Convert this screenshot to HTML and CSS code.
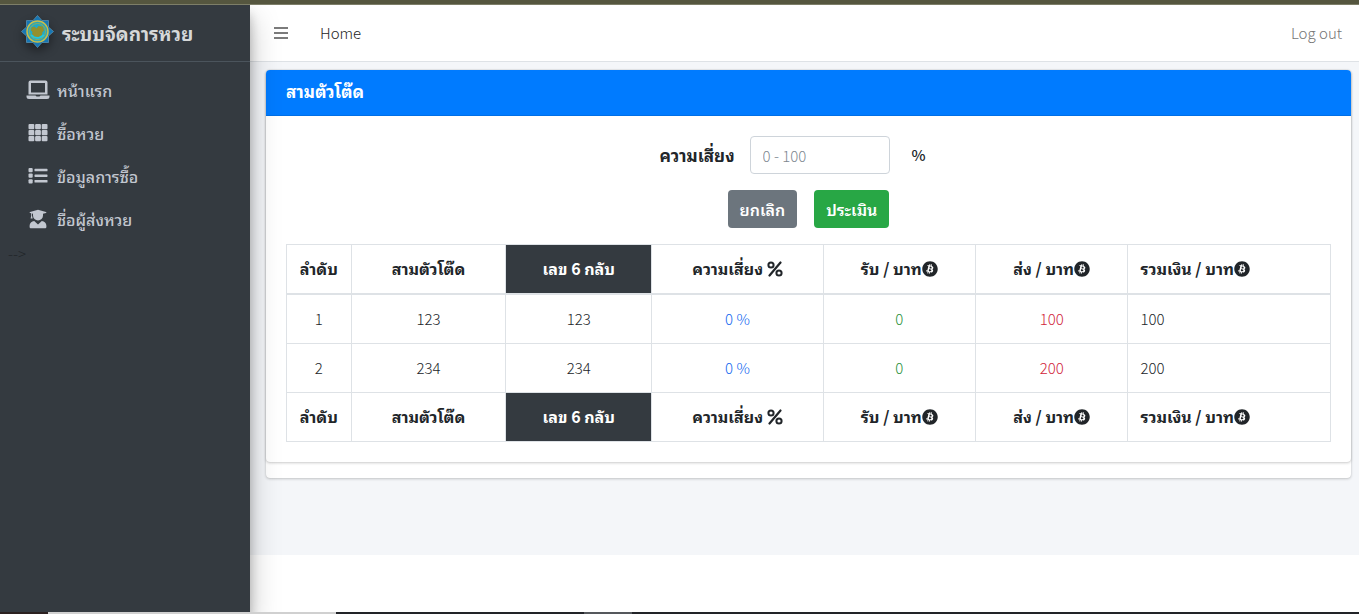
FILE: index.html
```
<!DOCTYPE html>
<html lang="th">
<head>
  <meta charset="UTF-8">
  <meta name="viewport" content="width=device-width, initial-scale=1.0">
  <title>ระบบจัดการหวย</title>
  <link rel="stylesheet" href="styles.css">
</head>
<body>
  <!-- shared icons -->
  <svg class="sprite" aria-hidden="true">
    <symbol id="icon-percent" viewBox="0 0 16 16">
      <path d="M13.500 1.500L2.500 14.500" stroke="currentColor" stroke-width="2.2" stroke-linecap="round"/>
      <circle cx="4" cy="4" r="2.6" fill="none" stroke="currentColor" stroke-width="2"/>
      <circle cx="12" cy="12" r="2.6" fill="none" stroke="currentColor" stroke-width="2"/>
    </symbol>
    <symbol id="icon-btc" viewBox="0 0 512 512">
      <path fill="currentColor" d="M504 256c0 136.967-111.033 248-248 248S8 392.967 8 256 119.033 8 256 8s248 111.033 248 248zm-141.651-35.33c4.937-32.999-20.191-50.739-54.55-62.573l11.146-44.702-27.213-6.781-10.851 43.524c-7.154-1.783-14.502-3.464-21.803-5.13l10.929-43.81-27.198-6.781-11.153 44.686c-5.922-1.349-11.735-2.682-17.377-4.084l.031-.14-37.53-9.37-7.239 29.062s20.191 4.627 19.765 4.913c11.022 2.751 13.014 10.044 12.68 15.825l-12.696 50.925c.76.194 1.744.473 2.829.907-.907-.225-1.876-.473-2.876-.713l-17.796 71.338c-1.349 3.348-4.767 8.37-12.471 6.464.271.395-19.78-4.937-19.78-4.937l-13.51 31.147 35.414 8.827c6.588 1.651 13.045 3.379 19.4 5.006l-11.262 45.213 27.182 6.781 11.153-44.733a1038.209 1038.209 0 0 0 21.687 5.627l-11.115 44.523 27.213 6.781 11.262-45.128c46.404 8.781 81.299 5.239 95.986-36.727 11.834-33.79-.589-53.281-25.004-65.991 17.78-4.098 31.174-15.792 34.747-39.949zm-62.177 87.179c-8.41 33.79-65.308 15.523-83.755 10.943l14.944-59.899c18.446 4.603 77.6 13.717 68.811 48.956zm8.417-87.667c-7.673 30.736-55.031 15.12-70.393 11.292l13.548-54.327c15.363 3.828 64.836 10.973 56.845 43.035z"/>
    </symbol>
  </svg>

  <div class="top-strip"></div>

  <div class="wrapper">
    <aside class="sidebar">
      <a href="#" class="brand">
        <svg class="brand-logo" viewBox="0 0 66 66" aria-hidden="true">
          <g fill="#1676b4" stroke="#5b93b3" stroke-width="1.5">
            <path d="M33 1L42 11L55 11L55 24L65 33L55 42L55 55L42 55L33 65L24 55L11 55L11 42L1 33L11 24L11 11L24 11Z"/>
          </g>
          <circle cx="33" cy="33" r="21" fill="#2fa3b5" stroke="#c7bd4b" stroke-width="3"/>
          <circle cx="33" cy="33" r="16" fill="#1fa9c9" stroke="#8fae5a" stroke-width="2"/>
          <path d="M20 40q13 11 26 0" fill="none" stroke="#20c6df" stroke-width="4"/>
          <path fill="#93902c" d="M21 25l6-2 4 4 4-5 9 1 2 8-3 3-1 6-7 4-8-1-5-5 1-4-3-3z"/>
        </svg>
        <span>ระบบจัดการหวย</span>
      </a>

      <nav class="menu">
        <a href="#" class="menu-link">
          <svg class="menu-icon icon-laptop" viewBox="0 0 24 20" fill="currentColor" aria-hidden="true">
            <path fill-rule="evenodd" d="M4.500 0.500h15a2 2 0 0 1 2 2v12h-19v-12a2 2 0 0 1 2-2zM5 3v9.500h14V3z"/>
            <path d="M0.500 15.500h9l1 1h3l1-1h9v1a2.500 2.500 0 0 1-2.500 2.500H3a2.500 2.500 0 0 1-2.500-2.500z"/>
          </svg>
          <span>หน้าแรก</span>
        </a>
        <a href="#" class="menu-link">
          <svg class="menu-icon" viewBox="0 0 20 20" fill="currentColor" aria-hidden="true">
            <rect x="0.500" y="1" width="5.800" height="5.200" rx="1"/><rect x="7.100" y="1" width="5.800" height="5.200" rx="1"/><rect x="13.700" y="1" width="5.800" height="5.200" rx="1"/>
            <rect x="0.500" y="7" width="5.800" height="5.200" rx="1"/><rect x="7.100" y="7" width="5.800" height="5.200" rx="1"/><rect x="13.700" y="7" width="5.800" height="5.200" rx="1"/>
            <rect x="0.500" y="13" width="5.800" height="5.200" rx="1"/><rect x="7.100" y="13" width="5.800" height="5.200" rx="1"/><rect x="13.700" y="13" width="5.800" height="5.200" rx="1"/>
          </svg>
          <span>ซื้อหวย</span>
        </a>
        <a href="#" class="menu-link">
          <svg class="menu-icon" viewBox="0 0 20 20" fill="currentColor" aria-hidden="true">
            <rect x="0.500" y="2" width="4.200" height="4.200" rx="1"/><rect x="0.500" y="7.600" width="4.200" height="4.200" rx="1"/><rect x="0.500" y="13.200" width="4.200" height="4.200" rx="1"/>
            <rect x="6.500" y="2.800" width="13" height="2.500" rx="0.600"/><rect x="6.500" y="8.400" width="13" height="2.500" rx="0.600"/><rect x="6.500" y="14" width="13" height="2.500" rx="0.600"/>
          </svg>
          <span>ข้อมูลการซื้อ</span>
        </a>
        <a href="#" class="menu-link">
          <svg class="menu-icon" viewBox="0 0 20 20" fill="currentColor" aria-hidden="true">
            <path d="M10 0.800l8 2.200q1 .4 0 .9l-3 .9v1.700a5 5 0 0 1-10 0V4.800l-1-.3v2.300l.7 2.700H2.600l.6-2.700V4.200L2 3.900q-1-.5 0-.9z"/>
            <path d="M6.200 12L10 15.500 13.800 12c2.600.4 4.600 2.200 4.600 4.800v1c0 1-.6 1.500-1.500 1.500H3.100c-.9 0-1.500-.5-1.500-1.500v-1c0-2.600 2-4.400 4.600-4.800z"/>
          </svg>
          <span>ชื่อผู้ส่งหวย</span>
        </a>
      </nav>
      <div class="stray">--&gt;</div>
    </aside>

    <div class="page">
      <header class="navbar">
        <button type="button" class="nav-toggle" aria-label="Menu">
          <svg viewBox="0 0 14 12" aria-hidden="true"><path d="M0 1h14M0 6h14M0 11h14" stroke="currentColor" stroke-width="2"/></svg>
        </button>
        <a href="#" class="nav-home">Home</a>
        <a href="#" class="nav-logout">Log out</a>
      </header>

      <main class="content">
        <div class="card">
          <section class="card card-inner">
            <h3 class="card-header">สามตัวโต๊ด</h3>
            <div class="card-body">
              <form class="risk-form">
                <div class="form-row">
                  <label for="risk">ความเสี่ยง</label>
                  <input type="text" id="risk" class="form-control" placeholder="0 - 100">
                  <span class="unit">%</span>
                </div>
                <div class="form-actions">
                  <button type="reset" class="btn btn-secondary">ยกเลิก</button>
                  <button type="button" class="btn btn-success">ประเมิน</button>
                </div>
              </form>

              <table class="table">
                <colgroup>
                  <col class="col-no">
                  <col class="col-tod">
                  <col class="col-six">
                  <col class="col-risk">
                  <col class="col-baht">
                  <col class="col-baht">
                  <col>
                </colgroup>
                <thead>
                  <tr>
                    <th>ลำดับ</th>
                    <th>สามตัวโต๊ด</th>
                    <th class="dark">เลข 6 กลับ</th>
                    <th>ความเสี่ยง <svg class="icon"><use href="#icon-percent"/></svg></th>
                    <th>รับ / บาท<svg class="icon"><use href="#icon-btc"/></svg></th>
                    <th>ส่ง / บาท<svg class="icon"><use href="#icon-btc"/></svg></th>
                    <th class="left">รวมเงิน / บาท<svg class="icon"><use href="#icon-btc"/></svg></th>
                  </tr>
                </thead>
                <tbody>
                  <tr>
                    <td>1</td>
                    <td>123</td>
                    <td>123</td>
                    <td class="text-primary">0 %</td>
                    <td class="text-success">0</td>
                    <td class="text-danger">100</td>
                    <td class="left">100</td>
                  </tr>
                  <tr>
                    <td>2</td>
                    <td>234</td>
                    <td>234</td>
                    <td class="text-primary">0 %</td>
                    <td class="text-success">0</td>
                    <td class="text-danger">200</td>
                    <td class="left">200</td>
                  </tr>
                </tbody>
                <tfoot>
                  <tr>
                    <th>ลำดับ</th>
                    <th>สามตัวโต๊ด</th>
                    <th class="dark">เลข 6 กลับ</th>
                    <th>ความเสี่ยง <svg class="icon"><use href="#icon-percent"/></svg></th>
                    <th>รับ / บาท<svg class="icon"><use href="#icon-btc"/></svg></th>
                    <th>ส่ง / บาท<svg class="icon"><use href="#icon-btc"/></svg></th>
                    <th class="left">รวมเงิน / บาท<svg class="icon"><use href="#icon-btc"/></svg></th>
                  </tr>
                </tfoot>
              </table>
            </div>
          </section>
        </div>
      </main>
      <footer class="footer"></footer>
    </div>
  </div>

  <div class="bottom-strip"></div>
</body>
</html>
```

FILE: styles.css
```
* {
  box-sizing: border-box;
}

body {
  margin: 0;
  min-height: 100vh;
  display: flex;
  flex-direction: column;
  font-family: "Source Sans Pro", "Noto Sans CJK SC", "Noto Sans Thai Looped", "Loma", "Waree", "Garuda", sans-serif;
  font-size: 15px;
  font-weight: 300;
  line-height: 24px;
  color: #212529;
  background: #fff;
}

a {
  color: inherit;
  text-decoration: none;
}

.sprite {
  position: absolute;
  width: 0;
  height: 0;
}

.top-strip {
  height: 5px;
  background: #55563f;
  border-bottom: 1px solid #7d7e68;
}

.bottom-strip {
  height: 2px;
  background: linear-gradient(90deg, #2b2020 48px, #d0d0d0 48px, #d0d0d0 336px, #222428 336px, #222428 584px, #55585c 584px, #55585c 632px, #222428 632px);
}

.wrapper {
  flex: 1;
  display: flex;
}

/* Sidebar */
.sidebar {
  width: 250px;
  flex-shrink: 0;
  background: #343a40;
  color: #c2c7d0;
  box-shadow: 0 14px 28px rgba(0,0,0,0.25), 0 10px 10px rgba(0,0,0,0.22);
  clip-path: inset(0 -60px 0 0);
  z-index: 2;
}

.brand {
  display: flex;
  align-items: center;
  gap: 8px;
  height: 57px;
  padding: 0 21px;
  border-bottom: 1px solid #4b545c;
  color: #d6d8d9;
  font-size: 19px;
  font-weight: 700;
}

.brand-logo {
  width: 33px;
  height: 33px;
  margin-bottom: 3px;
  filter: drop-shadow(0 5px 5px rgba(0,0,0,0.4));
}

.menu {
  display: flex;
  flex-direction: column;
  gap: 3px;
  padding: 8px 8px 3px;
}

.menu-link {
  display: flex;
  align-items: center;
  gap: 7px;
  height: 40px;
  padding: 0 18px;
  font-size: 16px;
  font-weight: 500;
}

.menu-icon {
  width: 24px;
  height: 20px;
}

.stray {
  padding-left: 8px;
  color: #212529;
}

/* Main area */
.page {
  flex: 1;
  min-width: 0;
  display: flex;
  flex-direction: column;
}

.navbar {
  display: flex;
  align-items: center;
  height: 57px;
  padding: 0 17px 0 24px;
  border-bottom: 1px solid #dee2e6;
}

.nav-toggle {
  display: flex;
  padding: 0;
  border: none;
  background: none;
  color: #7b7b7b;
  cursor: pointer;
}

.nav-toggle svg {
  width: 14px;
  height: 12px;
}

.nav-home {
  margin-left: 32px;
  color: #262626;
}

.nav-logout {
  margin-left: auto;
  color: #757575;
}

.content {
  flex: 1;
  padding: 8px 8px 16px 16px;
  background: #f4f6f9;
}

.footer {
  height: 57px;
}

.card {
  background: #fff;
  border-radius: 4px;
  box-shadow: 0 0 1px rgba(0,0,0,0.13), 0 1px 3px rgba(0,0,0,0.2);
  padding-bottom: 16px;
}

.card-inner {
  padding-bottom: 0;
}

.card-header {
  margin: 0;
  padding: 9px 20px 12px;
  border-bottom: 1px solid #006fe6;
  border-radius: 4px 4px 0 0;
  background: #007bff;
  color: #fff;
  font-size: 17px;
  font-weight: 700;
}

.card-body {
  padding: 20px;
}

.form-row,
.form-actions {
  display: flex;
  align-items: center;
  justify-content: center;
  margin-bottom: 16px;
}

.form-row label {
  margin-right: 15px;
  font-size: 17px;
  font-weight: 700;
}

.form-control {
  width: 140px;
  height: 38px;
  padding: 6px 12px;
  border: 1px solid #ced4da;
  border-radius: 4px;
  font: inherit;
  color: #495057;
}

.form-control::placeholder {
  color: #7d868f;
  opacity: 1;
}

.unit {
  width: 68px;
  padding-left: 22px;
  font-weight: 500;
}

.form-actions {
  gap: 17px;
}

.btn {
  height: 38px;
  padding: 0 12px;
  border: none;
  border-radius: 4px;
  color: #fff;
  font: inherit;
  font-size: 16px;
  font-weight: 600;
  cursor: pointer;
}

.btn-secondary {
  background: #6c757d;
}

.btn-success {
  background: #28a745;
}

/* Table */
.table {
  width: 100%;
  table-layout: fixed;
  border-collapse: collapse;
}

.table th,
.table td {
  padding: 12px;
  border: 1px solid #dee2e6;
  text-align: center;
  white-space: nowrap;
}

.table th {
  padding: 11px 12px 13px;
  font-size: 16px;
  font-weight: 700;
}

.table thead th {
  border-bottom-width: 2px;
}

.table .left {
  text-align: left;
}

.table .dark {
  background: #343a40;
  color: #fff;
}

.col-no { width: 6.2%; }
.col-tod { width: 14.8%; }
.col-six { width: 14%; }
.col-risk { width: 16.4%; }
.col-baht { width: 14.6%; }

.icon {
  width: 16px;
  height: 16px;
  vertical-align: -2px;
}

.table .text-primary { color: #1067f0; }
.table .text-success { color: #1f8f39; }
.table .text-danger { color: #d1253a; }
```
